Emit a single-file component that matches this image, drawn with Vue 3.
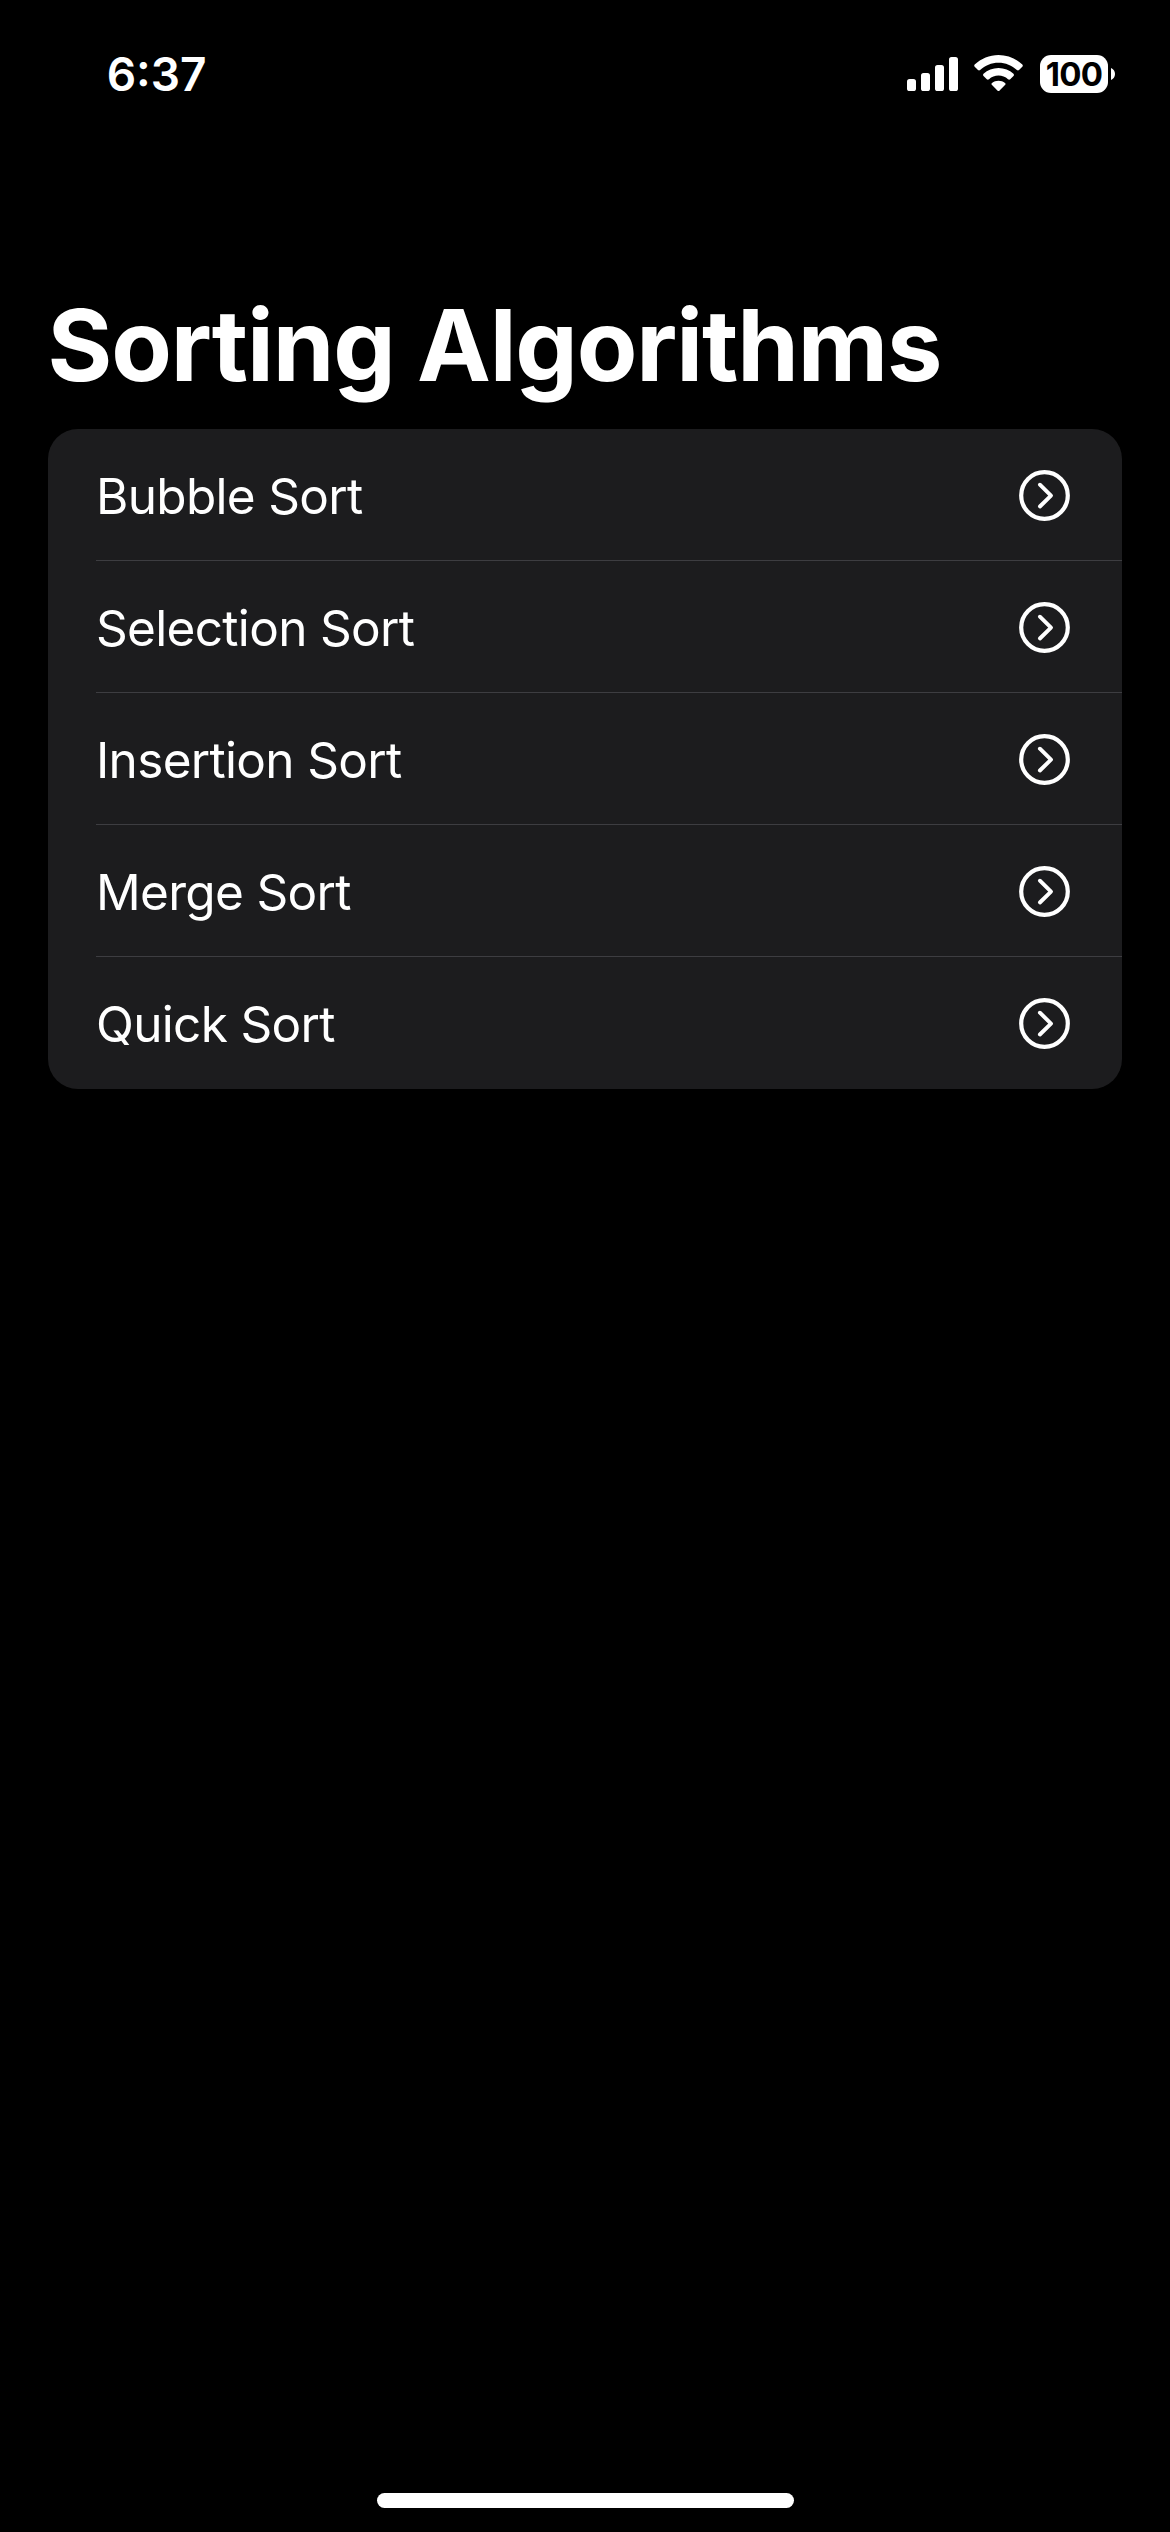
<script setup>
const algorithms = ['Bubble Sort', 'Selection Sort', 'Insertion Sort', 'Merge Sort', 'Quick Sort']
</script>

<template>
  <main class="screen">
    <header class="status">
      <time class="clock">6:37</time>
      <div class="indicators">
        <svg class="signal" width="51" height="34" viewBox="0 0 51 34">
          <rect x="0" y="22" width="9" height="12" rx="2.6" />
          <rect x="14" y="16" width="9" height="18" rx="2.6" />
          <rect x="28" y="8" width="9" height="26" rx="2.6" />
          <rect x="42" y="0" width="9" height="34" rx="2.6" />
        </svg>
        <svg class="wifi" width="49" height="36" viewBox="0 0 49 36">
          <path d="M24.5 0C33.5 0 41.9 3.5 48.3 9.6Q49.3 10.700 48.3 11.800L45 15Q44 15.900 42.900 15C38 10.300 31.500 7.700 24.500 7.700S11 10.300 6.100 15Q5 15.900 4 15L.7 11.800Q-.3 10.700 .7 9.600C7.100 3.500 15.500 0 24.500 0Z" />
          <path d="M24.5 12.9C30.2 12.9 35.5 15 39.5 18.700Q40.600 19.900 39.500 21L36.200 24.200Q35.200 25.100 34 24.200C31.400 21.900 28.100 20.600 24.500 20.600S17.600 21.900 15 24.200Q13.800 25.100 12.800 24.200L9.500 21Q8.400 19.900 9.500 18.700C13.500 15 18.800 12.900 24.500 12.900Z" />
          <path d="M24.5 25.7C27 25.7 29.2 26.5 31 27.900Q32.100 29 31 30.100L25.600 35.400Q24.500 36.400 23.400 35.400L18 30.100Q16.900 29 18 27.900C19.800 26.500 22 25.700 24.500 25.700Z" />
        </svg>
        <div class="battery">
          <span class="level">100</span>
          <svg class="nub" width="4" height="12" viewBox="0 0 4 12"><path d="M0 0C2.400 1 4 3.300 4 6S2.400 11 0 12Z" /></svg>
        </div>
      </div>
    </header>
    <h1 class="title">Sorting Algorithms</h1>
    <ul class="list">
      <li v-for="name in algorithms" :key="name" class="row">
        <span class="name">{{ name }}</span>
        <svg class="chevron" width="51" height="51" viewBox="0 0 51 51">
          <circle cx="25.5" cy="25.5" r="23.3" />
          <path d="M20.900 14.700L32 25.600L20.900 36.500" />
        </svg>
      </li>
    </ul>
    <div class="home"></div>
  </main>
</template>

<style>
body { background: #000; }
</style>

<style scoped>
.screen {
  box-sizing: border-box;
  height: 2532px;
  display: flex;
  flex-direction: column;
  background: #000;
  color: #fff;
  font-family: Inter, "Liberation Sans", sans-serif;
}
.status {
  height: 149px;
  box-sizing: border-box;
  padding: 0 55px 0 106.700px;
  display: flex;
  justify-content: space-between;
  align-items: flex-start;
}
.clock {
  margin-top: 46px;
  font-size: 46px;
  line-height: 56px;
  font-weight: 600;
}
.indicators {
  margin-top: 55px;
  display: flex;
}
svg { display: block; fill: #fff; }
.signal { margin: 2px 16px 0 0; }
.wifi { margin-right: 17px; }
.battery { display: flex; align-items: center; gap: 3px; }
.level {
  width: 68px;
  height: 38px;
  border-radius: 11px;
  background: #fff;
  color: #000;
  font-size: 33px;
  line-height: 38px;
  font-weight: 700;
  letter-spacing: -0.8px;
  text-align: center;
}
.title {
  margin: 136px 0 0 47.5px;
  height: 144px;
  font-size: 99px;
  line-height: 120px;
  font-weight: 700;
  letter-spacing: -1.14px;
  white-space: nowrap;
}
.list {
  margin: 0 48px;
  padding: 0;
  list-style: none;
  border-radius: 30px;
  background: #1c1c1e;
}
.row {
  box-sizing: border-box;
  height: 132px;
  margin-left: 48px;
  padding-right: 52px;
  display: flex;
  align-items: flex-start;
  justify-content: space-between;
  border-bottom: 1px solid #3d3d41;
}
.row:last-child { border-bottom-color: transparent; }
.name {
  margin-top: 37px;
  font-size: 49.5px;
  line-height: 60px;
  letter-spacing: -0.68px;
}
.chevron {
  margin-top: 41px;
  fill: none;
  stroke: #fff;
  stroke-width: 4.2;
  stroke-linecap: round;
  stroke-linejoin: round;
}
.chevron path { stroke-width: 3.900; }
.home {
  width: 417px;
  height: 15px;
  margin: auto auto 24px;
  border-radius: 8px;
  background: #fff;
}
</style>
